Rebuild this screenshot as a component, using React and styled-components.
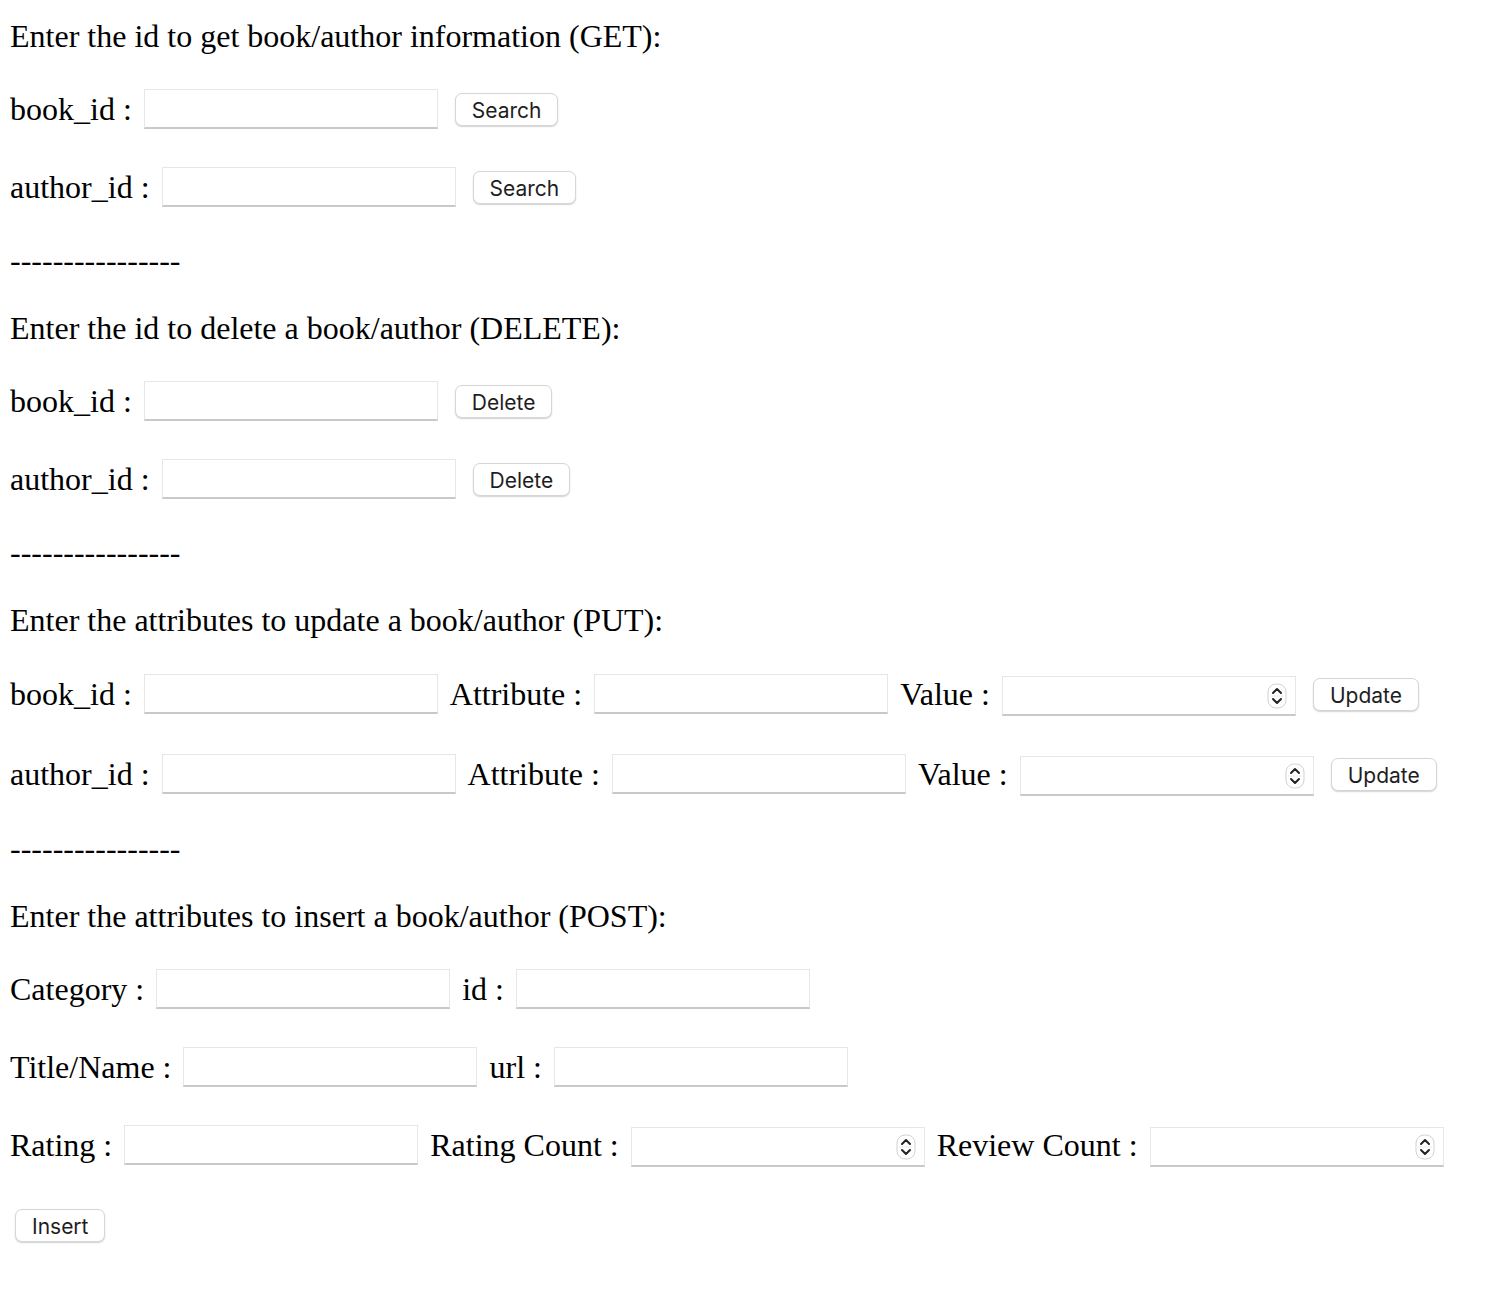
import React from "react";
import styled, { createGlobalStyle } from "styled-components";

const GlobalStyle = createGlobalStyle`
  body {
    margin: 0;
    background: #fff;
    color: #000;
    font-family: "Liberation Serif", "Times New Roman", serif;
  }
`;

const Page = styled.div`
  display: flex;
  flex-direction: column;
  gap: 32px;
  padding: 18px 10px;
`;

const Heading = styled.p`
  margin: 0;
  height: 36px;
  font-size: 32px;
  line-height: 36px;
  white-space: nowrap;
`;

const Row = styled.div`
  display: flex;
  align-items: center;
  height: ${props => props.$h || 46}px;
  font-size: 32px;
  white-space: nowrap;
`;

const Label = styled.span`
  line-height: 36px;
  margin-left: ${props => (props.$first ? 0 : 12)}px;
  margin-right: 12px;
`;

const TextInput = styled.input`
  box-sizing: border-box;
  width: 294px;
  height: 40px;
  margin: 0;
  padding: 0 8px;
  border: 1px solid #e6e6e6;
  border-bottom: 2px solid #c9c9c9;
  border-radius: 0;
  background: #fff;
  font-size: 20px;
  outline: none;
`;

const NumberBox = styled.span`
  position: relative;
  display: inline-flex;
  margin-top: 4px;
`;

const Spinner = styled.svg`
  position: absolute;
  right: 9px;
  top: 50%;
  transform: translateY(-50%);
  pointer-events: none;
`;

const Button = styled.button`
  box-sizing: border-box;
  height: 33px;
  margin-left: ${props => props.$ml ?? 17}px;
  padding: 0 16px;
  border: 1px solid #d6d6d6;
  border-radius: 7px;
  background: #fff;
  box-shadow: 0 1px 1.5px rgba(0, 0, 0, 0.18);
  color: #1e1e1e;
  font-family: Inter, "Liberation Sans", sans-serif;
  font-size: 21px;
  line-height: 1;
  padding-top: 2px;
  cursor: pointer;
`;

const Dashes = () => <Heading>----------------</Heading>;

function NumberInput() {
  return (
    <NumberBox>
      <TextInput type="text" inputMode="numeric" style={{ paddingRight: 36 }} />
      <Spinner width="20" height="26" viewBox="0 0 20 26">
        <rect x="1" y="1" width="18" height="24" rx="8" fill="#fff" stroke="#d2d2d2" />
        <line x1="3" y1="13" x2="17" y2="13" stroke="#ececec" />
        <path d="M6 10 L10 6 L14 10" fill="none" stroke="#222" strokeWidth="2" strokeLinecap="round" strokeLinejoin="round" />
        <path d="M6 16 L10 20 L14 16" fill="none" stroke="#222" strokeWidth="2" strokeLinecap="round" strokeLinejoin="round" />
      </Spinner>
    </NumberBox>
  );
}

function IdRow({ label, action }) {
  return (
    <Row>
      <Label $first>{label} :</Label>
      <TextInput type="text" />
      <Button>{action}</Button>
    </Row>
  );
}

function UpdateRow({ label }) {
  return (
    <Row $h={48}>
      <Label $first>{label} :</Label>
      <TextInput type="text" />
      <Label>Attribute :</Label>
      <TextInput type="text" />
      <Label>Value :</Label>
      <NumberInput />
      <Button>Update</Button>
    </Row>
  );
}

export default function App() {
  return (
    <>
      <GlobalStyle />
      <Page>
        <Heading>Enter the id to get book/author information (GET):</Heading>
        <IdRow label="book_id" action="Search" />
        <IdRow label="author_id" action="Search" />
        <Dashes />

        <Heading>Enter the id to delete a book/author (DELETE):</Heading>
        <IdRow label="book_id" action="Delete" />
        <IdRow label="author_id" action="Delete" />
        <Dashes />

        <Heading>Enter the attributes to update a book/author (PUT):</Heading>
        <UpdateRow label="book_id" />
        <UpdateRow label="author_id" />
        <Dashes />

        <Heading>Enter the attributes to insert a book/author (POST):</Heading>
        <Row>
          <Label $first>Category :</Label>
          <TextInput type="text" />
          <Label>id :</Label>
          <TextInput type="text" />
        </Row>
        <Row>
          <Label $first>Title/Name :</Label>
          <TextInput type="text" />
          <Label>url :</Label>
          <TextInput type="text" />
        </Row>
        <Row>
          <Label $first>Rating :</Label>
          <TextInput type="text" />
          <Label>Rating Count :</Label>
          <NumberInput />
          <Label>Review Count :</Label>
          <NumberInput />
        </Row>
        <Row $h={50}>
          <Button $ml={5}>Insert</Button>
        </Row>
      </Page>
    </>
  );
}
